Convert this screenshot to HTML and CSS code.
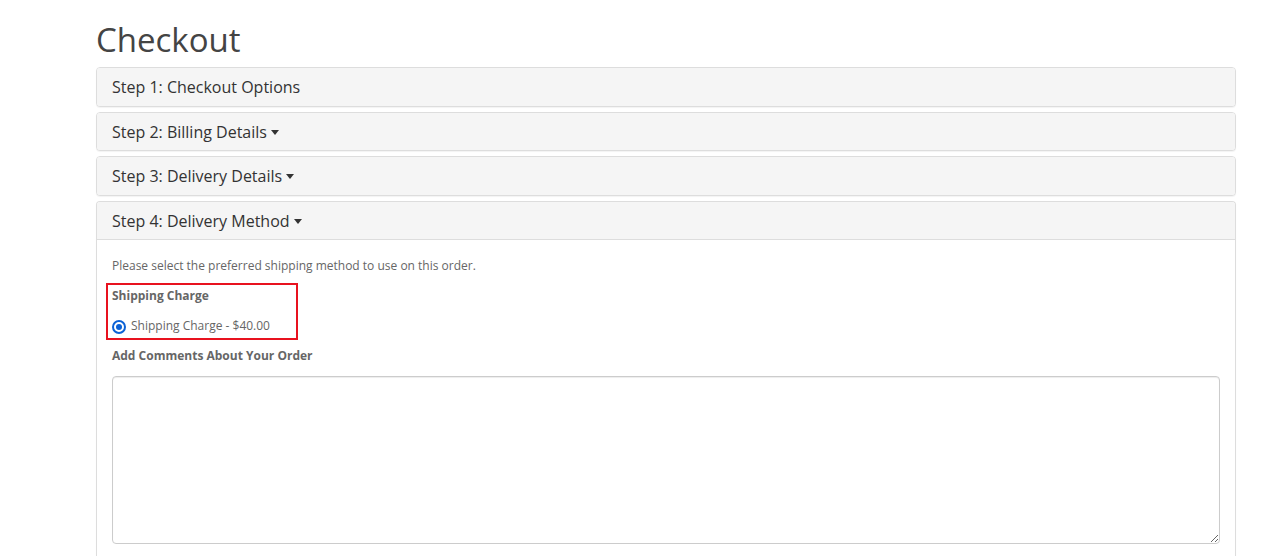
FILE: index.html
```html
<!DOCTYPE html>
<html>
<head>
<meta charset="utf-8">
<link rel="stylesheet" href="styles.css">
</head>
<body>
<div class="container">
  <h1 class="page-title">Checkout</h1>
  <div class="panel-group">
    <div class="panel">
      <div class="panel-heading"><h4 class="panel-title">Step 1: Checkout Options</h4></div>
    </div>
    <div class="panel">
      <div class="panel-heading"><h4 class="panel-title">Step 2: Billing Details <span class="caret"></span></h4></div>
    </div>
    <div class="panel">
      <div class="panel-heading"><h4 class="panel-title">Step 3: Delivery Details <span class="caret"></span></h4></div>
    </div>
    <div class="panel panel-open">
      <div class="panel-heading"><h4 class="panel-title">Step 4: Delivery Method <span class="caret"></span></h4></div>
      <div class="panel-body">
        <p>Please select the preferred shipping method to use on this order.</p>
        <div class="highlight-wrap">
          <p><strong>Shipping Charge</strong></p>
          <div class="radio">
            <label><span class="radio-input"></span>Shipping Charge - $40.00</label>
          </div>
          <div class="highlight-box"></div>
        </div>
        <p><strong>Add Comments About Your Order</strong></p>
        <textarea class="form-control"></textarea>
      </div>
    </div>
  </div>
</div>
</body>
</html>
```
FILE: styles.css
```css
* { box-sizing: border-box; }
html, body { margin: 0; padding: 0; background: #fff; }
body {
  font-family: "Open Sans", "Liberation Sans", sans-serif;
  font-size: 12px;
  line-height: 20px;
  color: #666;
  overflow: hidden;
  height: 556px;
}
.container {
  width: 1140px;
  margin-left: 96px;
}
.page-title {
  font-size: 33px;
  font-weight: 400;
  color: #444;
  line-height: 36px;
  margin: 0;
  padding-top: 22px;
  margin-bottom: 9px;
}
.panel {
  border: 1px solid #ddd;
  border-radius: 4px;
  background: #fff;
  margin-bottom: 5px;
  box-shadow: 0 1px 1px rgba(0,0,0,0.05);
}
.panel-heading {
  background: #f5f5f5;
  padding: 11px 15px 9px;
  border-radius: 3px;
}
.panel-open { border-bottom: none; border-radius: 4px 4px 0 0; }
.panel-open .panel-heading {
  border-bottom: 1px solid #ddd;
  border-radius: 3px 3px 0 0;
}
.panel-title {
  margin: 0;
  font-size: 16px;
  font-weight: 400;
  line-height: 17.6px;
  color: #333;
}
.caret {
  display: inline-block;
  width: 0;
  height: 0;
  border-top: 5px solid #333;
  border-left: 4.5px solid transparent;
  border-right: 4.5px solid transparent;
  vertical-align: middle;
  margin-left: 0;
  margin-top: -2px;
}
.panel-body {
  padding: 16px 15px 20px;
}
p { margin: 0 0 10px; }
strong { font-weight: 700; color: #666; }
.highlight-wrap { position: relative; }
.highlight-box {
  position: absolute;
  left: -6px;
  top: -3px;
  width: 192px;
  height: 57px;
  border: 2px solid #e8121f;
}
.radio { margin: 10px 0; }
.radio label {
  display: flex;
  align-items: center;
  min-height: 20px;
  font-weight: 400;
}
.radio-input {
  width: 14px;
  height: 14px;
  border: 2px solid #0b62d6;
  border-radius: 50%;
  margin: 1px 5px 0 0;
  position: relative;
  flex: none;
}
.radio-input::after {
  content: "";
  position: absolute;
  left: 2px;
  top: 2px;
  width: 6px;
  height: 6px;
  border-radius: 50%;
  background: #0b62d6;
}
.form-control {
  display: block;
  width: 1108px;
  height: 168px;
  border: 1px solid #ccc;
  border-radius: 4px;
  box-shadow: inset 0 1px 1px rgba(0,0,0,0.075);
  padding: 6px 12px;
  font-family: inherit;
  font-size: 12px;
  resize: vertical;
  margin: 0;
}
```
